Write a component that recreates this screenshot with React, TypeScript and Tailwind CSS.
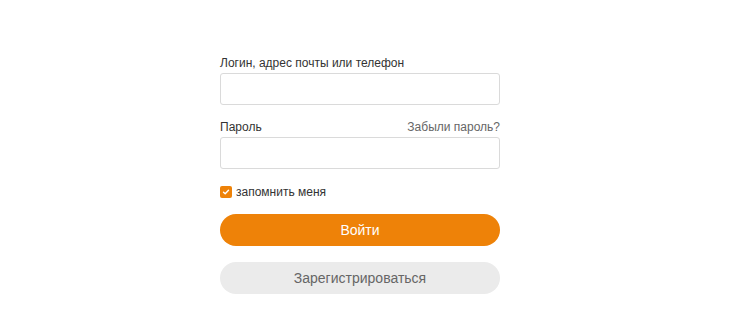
export default function App() {
  return (
    <div className="min-h-screen bg-white [font-family:'Liberation_Sans',Arial,sans-serif] text-[#333]">
      <form className="w-[280px] ml-[220px] pt-[55px] flex flex-col">
        <label className="text-[12px] leading-[16px] mb-[2px]">Логин, адрес почты или телефон</label>
        <input className="h-[32px] w-full border border-[#dadada] rounded-[3px] px-2 text-[14px] outline-none" />

        <div className="flex justify-between items-end mt-[14px] mb-[2px] text-[12px] leading-[16px]">
          <span>Пароль</span>
          <a className="text-[#666]">Забыли пароль?</a>
        </div>
        <input type="password" className="h-[32px] w-full border border-[#dadada] rounded-[3px] px-2 text-[14px] outline-none" />

        <label className="flex items-center mt-[17px] text-[12px] leading-[12px]">
          <span className="w-[12px] h-[12px] rounded-[2px] bg-[#ee8208] flex items-center justify-center mr-[4px]">
            <svg width="8" height="8" viewBox="0 0 8 8" fill="none">
              <path d="M1.5 4.2 L3.2 5.8 L6.5 2.3" stroke="#fff" strokeWidth="1.4" strokeLinecap="round" strokeLinejoin="round" />
            </svg>
          </span>
          запомнить меня
        </label>

        <button type="button" className="mt-[16px] h-[32px] w-full rounded-full bg-[#ee8208] text-white text-[14px]">
          Войти
        </button>
        <button type="button" className="mt-[16px] h-[32px] w-full rounded-full bg-[#ebebeb] text-[#666] text-[14px]">
          Зарегистрироваться
        </button>
      </form>
    </div>
  );
}
